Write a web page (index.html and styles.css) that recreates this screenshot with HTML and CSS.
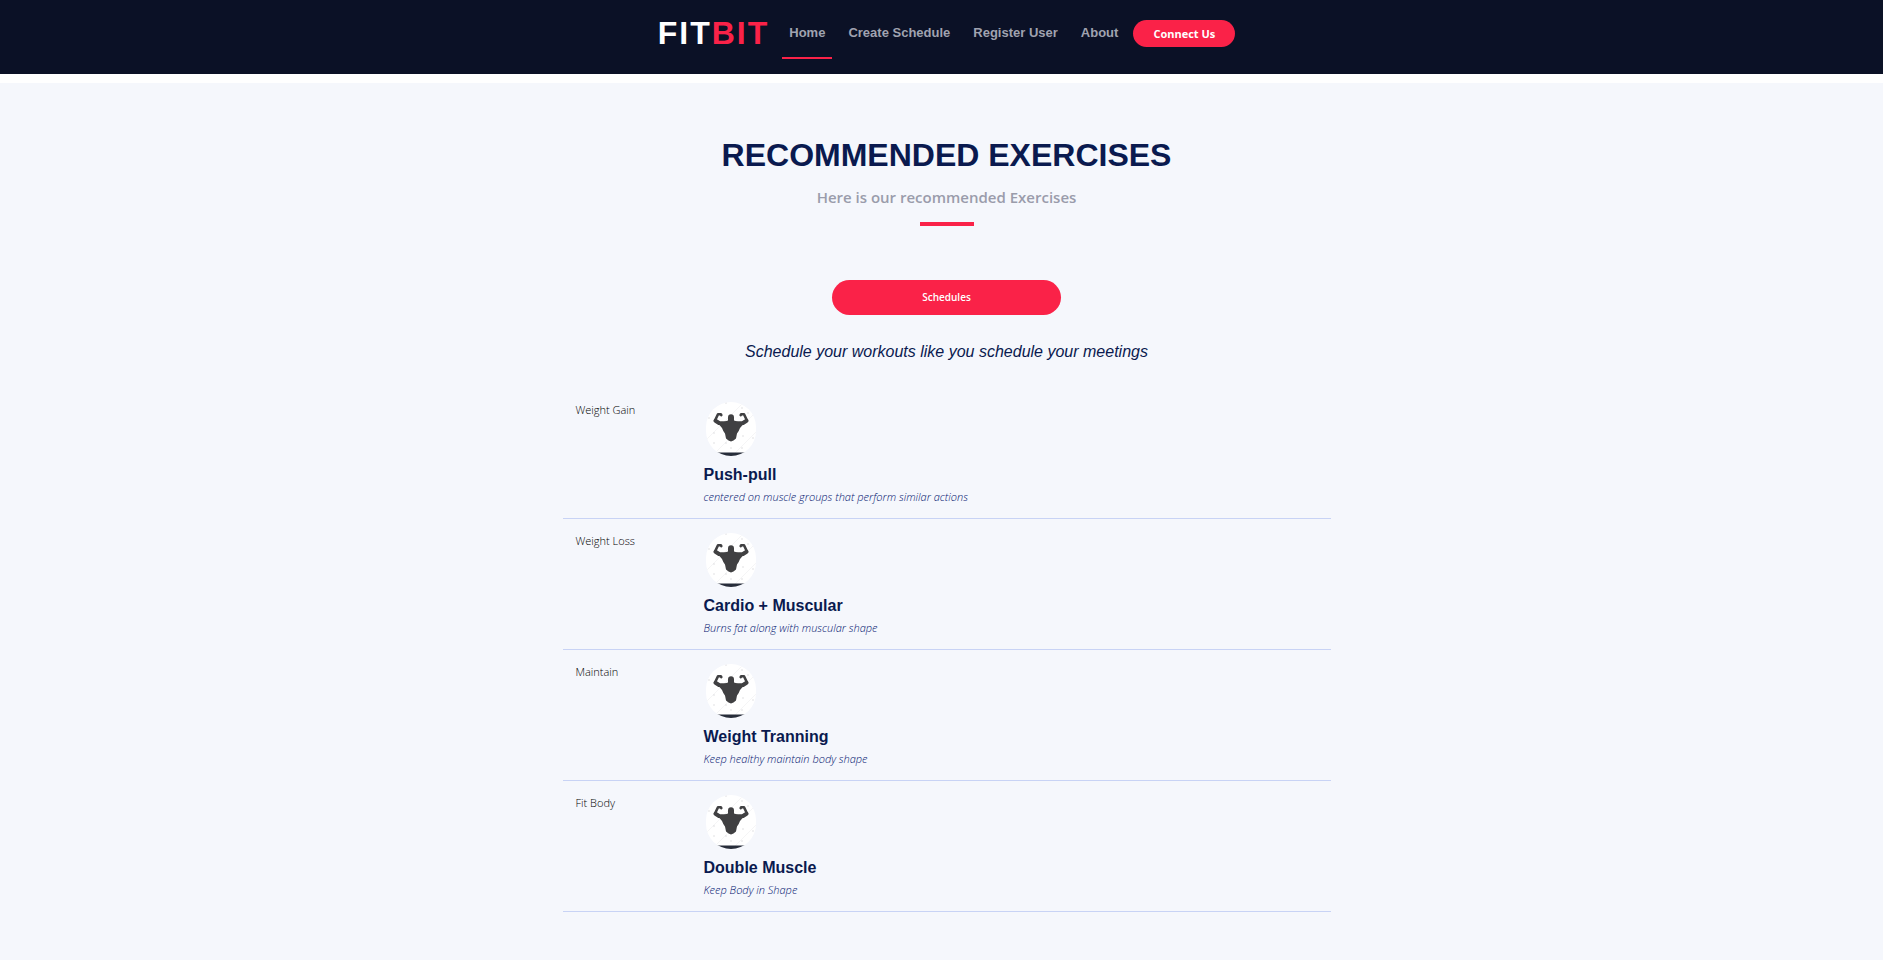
FILE: index.html
```html
<!DOCTYPE html>
<html lang="en">
<head>
<meta charset="utf-8">
<meta name="viewport" content="width=device-width, initial-scale=1">
<title>FitBit</title>
<link rel="stylesheet" href="styles.css">
</head>
<body>
<svg class="sprite" aria-hidden="true">
  <symbol id="muscle" viewBox="0 0 50 54">
    <rect width="50" height="54" fill="#fff"/>
    <g stroke="#f5f5f6" stroke-width="1"><path d="M-2 40L44-6M8 52L54 6M28 52L54 26"/></g>
    <g fill="#dcdcdf"><circle cx="20" cy="1" r=".8"/><circle cx="3" cy="16" r=".8"/><circle cx="36" cy="6" r=".8"/><circle cx="42" cy="11" r=".8"/><circle cx="8" cy="31" r=".8"/><circle cx="8" cy="41" r=".8"/><circle cx="20" cy="41" r=".8"/><circle cx="25" cy="46" r=".8"/><circle cx="36" cy="46" r=".8"/><circle cx="37" cy="34" r=".8"/><circle cx="47" cy="36" r=".8"/></g>
    <g fill="none" stroke="#404042" stroke-linecap="round" stroke-linejoin="round">
      <path stroke-width="2.600" d="M15.300 13.200L14.800 12.200L12 12.200L9 18.500M34.700 13.200L35.200 12.200L38 12.200L41 18.500"/>
      <path stroke-width="4" d="M9.500 18.800L13 21L20 21.500M40.500 18.800L37 21L30 21.500"/>
    </g>
    <path fill="#404042" d="M22 15.500Q22 12.200 25 12.200Q28 12.200 28 15.500L28 18.500L33 20L37 22.500L34 26Q33 29 31 31.500L30 36.500L27.500 38.500L25 39.500L22.500 38.500L20 36.500L19 31.500Q17 29 16 26L13 22.500L17 20L22 18.500Z"/>
    <rect y="50.500" width="50" height="4" fill="#272d3a"/>
  </symbol>
</svg>
<header class="navbar">
  <a class="logo" href="#">FIT<span class="logo-accent">BIT</span></a>
  <nav class="menu">
    <a class="menu-link active" href="#">Home</a>
    <a class="menu-link" href="#">Create Schedule</a>
    <a class="menu-link" href="#">Register User</a>
    <a class="menu-link" href="#">About</a>
  </nav>
  <button class="btn btn-connect" type="button">Connect Us</button>
</header>
<main class="exercises">
  <h1 class="title">RECOMMENDED EXERCISES</h1>
  <p class="subtitle">Here is our recommended Exercises</p>
  <div class="rule"></div>
  <button class="btn btn-schedules" type="button">Schedules</button>
  <p class="tagline">Schedule your workouts like you schedule your meetings</p>
  <table class="plans">
    <tbody>
      <tr>
        <th class="goal" scope="row">Weight Gain</th>
        <td class="plan"><svg class="avatar" role="img" aria-label="Push-pull"><use href="#muscle"/></svg><h2 class="plan-name">Push-pull</h2><p class="plan-note">centered on muscle groups that perform similar actions</p></td>
      </tr>
      <tr>
        <th class="goal" scope="row">Weight Loss</th>
        <td class="plan"><svg class="avatar" role="img" aria-label="Cardio + Muscular"><use href="#muscle"/></svg><h2 class="plan-name">Cardio + Muscular</h2><p class="plan-note">Burns fat along with muscular shape</p></td>
      </tr>
      <tr>
        <th class="goal" scope="row">Maintain</th>
        <td class="plan"><svg class="avatar" role="img" aria-label="Weight Tranning"><use href="#muscle"/></svg><h2 class="plan-name">Weight Tranning</h2><p class="plan-note">Keep healthy maintain body shape</p></td>
      </tr>
      <tr>
        <th class="goal" scope="row">Fit Body</th>
        <td class="plan"><svg class="avatar" role="img" aria-label="Double Muscle"><use href="#muscle"/></svg><h2 class="plan-name">Double Muscle</h2><p class="plan-note">Keep Body in Shape</p></td>
      </tr>
    </tbody>
  </table>
</main>
</body>
</html>
```
FILE: styles.css
```css
* { box-sizing: border-box; }

body {
  margin: 0;
  min-height: 100vh;
  display: flex;
  flex-direction: column;
  background: #fff;
  color: #0a1a4f;
  font-family: "Open Sans", "Noto Sans", sans-serif;
}

.sprite { position: absolute; width: 0; height: 0; }

h1, h2, p { margin: 0; }

.navbar {
  display: flex;
  justify-content: center;
  align-items: flex-start;
  padding: 16px 0 15px 10px;
  background: #0b1126;
}

.logo {
  font: bold 32px/34px "Liberation Sans", Arial, sans-serif;
  letter-spacing: 2px;
  color: #fff;
  text-decoration: none;
}

.logo-accent { color: #fa2248; }

.menu {
  display: flex;
  gap: 9px;
  margin: 0 8px 0 13px;
}

.menu-link {
  padding: 8px 7px 15px;
  border-bottom: 2px solid transparent;
  font: bold 13px/18px "Liberation Sans", Arial, sans-serif;
  color: #a0a3b0;
  text-decoration: none;
}

.menu-link.active { border-color: #fa2248; }

.btn {
  border: 0;
  border-radius: 18px;
  background: #fa2248;
  color: #fff;
  font: 600 11px/17px "Open Sans", "Noto Sans", sans-serif;
}

.btn-connect { margin-top: 4px; padding: 5px 20px; font-weight: 700; }

.exercises {
  flex: 1;
  display: flex;
  flex-direction: column;
  align-items: center;
  margin-top: 9px;
  padding: 53px 0 44px 10px;
  background: #f5f7fc;
}

.title { font: bold 32px/38px "Liberation Sans", Arial, sans-serif; }

.subtitle {
  margin-top: 12px;
  font-size: 15px;
  line-height: 22px;
  font-weight: 600;
  color: #9a9cab;
}

.rule { width: 54px; height: 4px; margin: 14px 0 54px; background: #fa2248; }

.btn-schedules { width: 229px; padding: 9px; font-size: 10px; }

.tagline {
  margin: 27px 0 26px;
  font: italic 16px/20px "Liberation Sans", Arial, sans-serif;
}

.plans { width: 768px; max-width: 100%; border-collapse: collapse; }

.plans tr { border-bottom: 1px solid #c8d3f5; }

.goal {
  width: 128px;
  padding: 14px 13px;
  vertical-align: top;
  text-align: left;
  font-size: 11px;
  line-height: 16px;
  font-weight: 300;
  color: #000;
}

.plan { padding: 14px 13px 13px; }

.avatar {
  display: block;
  width: 50px;
  height: 54px;
  margin-left: 2px;
  border-radius: 25px;
}

.plan-name {
  margin-top: 9px;
  font: bold 16px/20px "Liberation Sans", Arial, sans-serif;
}

.plan-note {
  margin-top: 4px;
  font-size: 11px;
  line-height: 16px;
  font-style: italic;
  font-weight: 300;
  color: #00126e;
}
```
